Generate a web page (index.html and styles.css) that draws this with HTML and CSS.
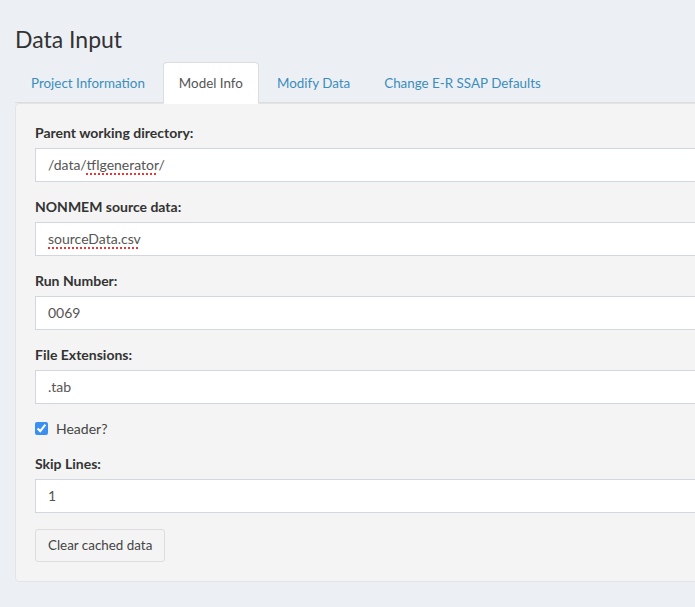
FILE: index.html
```html
<!DOCTYPE html>
<html>
<head>
<meta charset="utf-8">
<link rel="stylesheet" href="styles.css">
</head>
<body>
<div class="page">
  <h2 class="title">Data Input</h2>
  <ul class="tabs">
    <li class="tab"><a>Project Information</a></li>
    <li class="tab active"><a>Model Info</a></li>
    <li class="tab"><a>Modify Data</a></li>
    <li class="tab"><a>Change E-R SSAP Defaults</a></li>
  </ul>
  <div class="well">
    <div class="group">
      <label class="lbl">Parent working directory:</label>
      <div class="control">/data/<span class="spell">tflgenerator</span>/</div>
    </div>
    <div class="group">
      <label class="lbl">NONMEM source data:</label>
      <div class="control"><span class="spell">sourceData.csv</span></div>
    </div>
    <div class="group">
      <label class="lbl">Run Number:</label>
      <div class="control">0069</div>
    </div>
    <div class="group">
      <label class="lbl">File Extensions:</label>
      <div class="control">.tab</div>
    </div>
    <div class="check">
      <input type="checkbox" checked class="cb">
      <span>Header?</span>
    </div>
    <div class="group">
      <label class="lbl">Skip Lines:</label>
      <div class="control">1</div>
    </div>
    <button class="btn">Clear cached data</button>
  </div>
</div>
</body>
</html>
```
FILE: styles.css
```css
html, body {
  margin: 0;
  padding: 0;
  overflow: hidden;
  background: #ecf0f5;
}
body {
  font-family: Lato, "Open Sans", sans-serif;
  font-size: 14px;
  color: #333;
}
.page {
  width: 740px;
  padding: 0 0 0 15px;
}
.title {
  margin: 0;
  padding-top: 25px;
  height: 37px;
  font-size: 23px;
  font-weight: 400;
  line-height: 28px;
  color: #333;
}
.tabs {
  list-style: none;
  margin: 0;
  padding: 0;
  display: flex;
  border-bottom: 1px solid #ddd;
  height: 40px;
}
.tab {
  margin-right: 2px;
}
.tab a {
  display: block;
  padding: 10px 15px;
  line-height: 20px;
  color: #3c8dbc;
  border: 1px solid transparent;
  border-radius: 4px 4px 0 0;
  font-size: 13.4px;
}
.tab.active a {
  background: #fff;
  color: #555;
  border-color: #ddd #ddd transparent;
  height: 20px;
}
.well {
  background: #f4f4f4;
  border: 1px solid #e3e3e3;
  border-radius: 4px;
  padding: 19px;
  margin-top: 0;
}
.group {
  margin-bottom: 15px;
}
.lbl {
  display: block;
  font-weight: 700;
  line-height: 20px;
  margin-bottom: 5px;
  font-size: 14px;
}
.control {
  height: 34px;
  box-sizing: border-box;
  background: #fff;
  border: 1px solid #d2d6de;
  padding: 6px 12px;
  line-height: 20px;
  color: #555;
}
.spell {
  text-decoration: underline dotted #e33;
  text-decoration-thickness: 2px;
  text-underline-offset: 3px;
}
.check {
  display: flex;
  align-items: center;
  height: 20px;
  margin-top: -1px;
  margin-bottom: 16px;
  color: #444;
}
.cb {
  margin: 0 8px 0 0;
  width: 13px;
  height: 13px;
  accent-color: #3b8ff0;
}
.btn {
  display: block;
  margin-top: 16px;
  font-family: inherit;
  font-size: 13.4px;
  color: #444;
  background: #f4f4f4;
  border: 1px solid #ddd;
  border-radius: 3px;
  padding: 6px 12px;
  line-height: 19px;
}
```
